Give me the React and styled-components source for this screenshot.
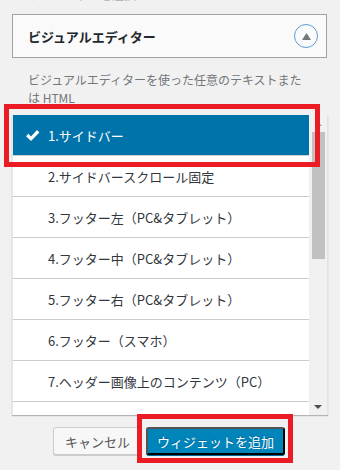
import styled, { createGlobalStyle } from "styled-components";

const GlobalStyle = createGlobalStyle`
  html, body {
    margin: 0;
    padding: 0;
    background: #f1f1f1;
    font-family: "Noto Sans CJK JP", "Noto Sans", sans-serif;
  }
`;

const items = [
  "1.サイドバー",
  "2.サイドバースクロール固定",
  "3.フッター左（PC&タブレット）",
  "4.フッター中（PC&タブレット）",
  "5.フッター右（PC&タブレット）",
  "6.フッター（スマホ）",
  "7.ヘッダー画像上のコンテンツ（PC）",
  "8.ヘッダー画像上のコンテンツ（スマホ）",
];

const Page = styled.div`
  position: relative;
  width: 340px;
  height: 470px;
  overflow: hidden;
  padding: 0 12px;
  box-sizing: border-box;
`;

const ClippedLabel = styled.div`
  margin: -13px 0 0 16px;
  font-size: 12px;
  line-height: 15px;
  color: #b4b9be;
`;

const WidgetHeader = styled.div`
  margin-top: 12px;
  width: 315px;
  height: 44px;
  box-sizing: border-box;
  display: flex;
  align-items: center;
  justify-content: space-between;
  padding: 0 8px 0 15px;
  background: #fafafa;
  border: 1px solid #a2a2a2;
`;

const Title = styled.h3`
  margin: 0;
  font-size: 13px;
  font-weight: 700;
  color: #23282d;
`;

const Toggle = styled.span`
  width: 24px;
  height: 24px;
  box-sizing: border-box;
  border: 1.5px solid #5b9dd9;
  border-radius: 50%;
  display: flex;
  align-items: center;
  justify-content: center;
`;

const Description = styled.p`
  margin: 13px 0 0;
  padding-left: 16px;
  font-size: 12px;
  line-height: 18px;
  color: #72777c;
`;

const ListBox = styled.div`
  margin-top: 8px;
  width: 316px;
  height: 300px;
  display: flex;
  background: #fff;
  overflow: hidden;
  box-shadow: 0 1px 1px rgba(0, 0, 0, 0.25);
`;

const Items = styled.ul`
  flex: 1;
  margin: 0;
  padding: 0;
  list-style: none;
  border-left: 1px solid #e5e5e5;
`;

const Item = styled.li`
  height: 40px;
  display: flex;
  align-items: center;
  padding-left: 12px;
  border-bottom: 1px solid #ccc;
  font-size: 13px;
  color: ${(p) => (p.$selected ? "#fff" : "#32373c")};
  background: ${(p) => (p.$selected ? "#0073aa" : "#fff")};
  white-space: nowrap;
`;

const IconSlot = styled.span`
  width: 23px;
  display: flex;
  align-items: center;
`;

const ScrollTrack = styled.div`
  width: 18px;
  display: flex;
  flex-direction: column;
  background: #f1f1f1;
  border-right: 1px solid #e3e3e3;
`;

const ScrollArrow = styled.div`
  height: 17px;
  display: flex;
  align-items: center;
  justify-content: center;
`;

const ScrollRail = styled.div`
  flex: 1;
  padding: 0 2px 0 3px;
`;

const Thumb = styled.div`
  height: 127px;
  background: #c1c1c1;
`;

const Actions = styled.div`
  margin-top: 12px;
  display: flex;
  justify-content: center;
  gap: 4px;
  padding-right: 2px;
`;

const Button = styled.button`
  height: 28px;
  padding: 0 ${(p) => (p.$primary ? "9px" : "11px")};
  font-family: inherit;
  font-size: 13px;
  border-radius: 3px;
  border: 1px solid ${(p) => (p.$primary ? "#0073aa #006799 #006799" : "#ccc")};
  background: ${(p) => (p.$primary ? "#0085ba" : "#f7f7f7")};
  color: ${(p) => (p.$primary ? "#fff" : "#555")};
  box-shadow: 0 1px 0 ${(p) => (p.$primary ? "#006799" : "#ccc")};
  text-shadow: ${(p) => (p.$primary ? "0 -1px 1px #006799" : "none")};
`;

const Highlight = styled.div`
  position: absolute;
  border: 5px solid #ec1c24;
  box-sizing: border-box;
  pointer-events: none;
`;

function Check() {
  return (
    <svg width="15" height="13" viewBox="0 0 15 13">
      <path d="M1 7.2 L3.4 4.8 L6 7.4 L12 1 L14.4 3.4 L6 12 Z" fill="#fff" />
    </svg>
  );
}

export default function App() {
  return (
    <>
      <GlobalStyle />
      <Page>
        <ClippedLabel>ウィジェットを選択</ClippedLabel>

        <WidgetHeader>
          <Title>ビジュアルエディター</Title>
          <Toggle>
            <svg width="9" height="7" viewBox="0 0 9 7">
              <path d="M4.5 0 L9 7 L0 7 Z" fill="#72777c" />
            </svg>
          </Toggle>
        </WidgetHeader>

        <Description>
          ビジュアルエディターを使った任意のテキストまた
          <br />
          は HTML
        </Description>

        <ListBox>
          <Items>
            {items.map((label, i) => (
              <Item key={label} $selected={i === 0}>
                <IconSlot>{i === 0 && <Check />}</IconSlot>
                {label}
              </Item>
            ))}
          </Items>
          <ScrollTrack>
            <ScrollArrow>
              <svg width="7" height="4" viewBox="0 0 7 4">
                <path d="M3.5 0 L7 4 L0 4 Z" fill="#a3a3a3" />
              </svg>
            </ScrollArrow>
            <ScrollRail>
              <Thumb />
            </ScrollRail>
            <ScrollArrow>
              <svg width="8" height="4" viewBox="0 0 8 4">
                <path d="M0 0 L8 0 L4 4 Z" fill="#505050" />
              </svg>
            </ScrollArrow>
          </ScrollTrack>
        </ListBox>

        <Actions>
          <Button>キャンセル</Button>
          <Button $primary>ウィジェットを追加</Button>
        </Actions>

        <Highlight style={{ left: 4, top: 104, width: 316, height: 63 }} />
        <Highlight style={{ left: 137, top: 414, width: 156, height: 49 }} />
      </Page>
    </>
  );
}
